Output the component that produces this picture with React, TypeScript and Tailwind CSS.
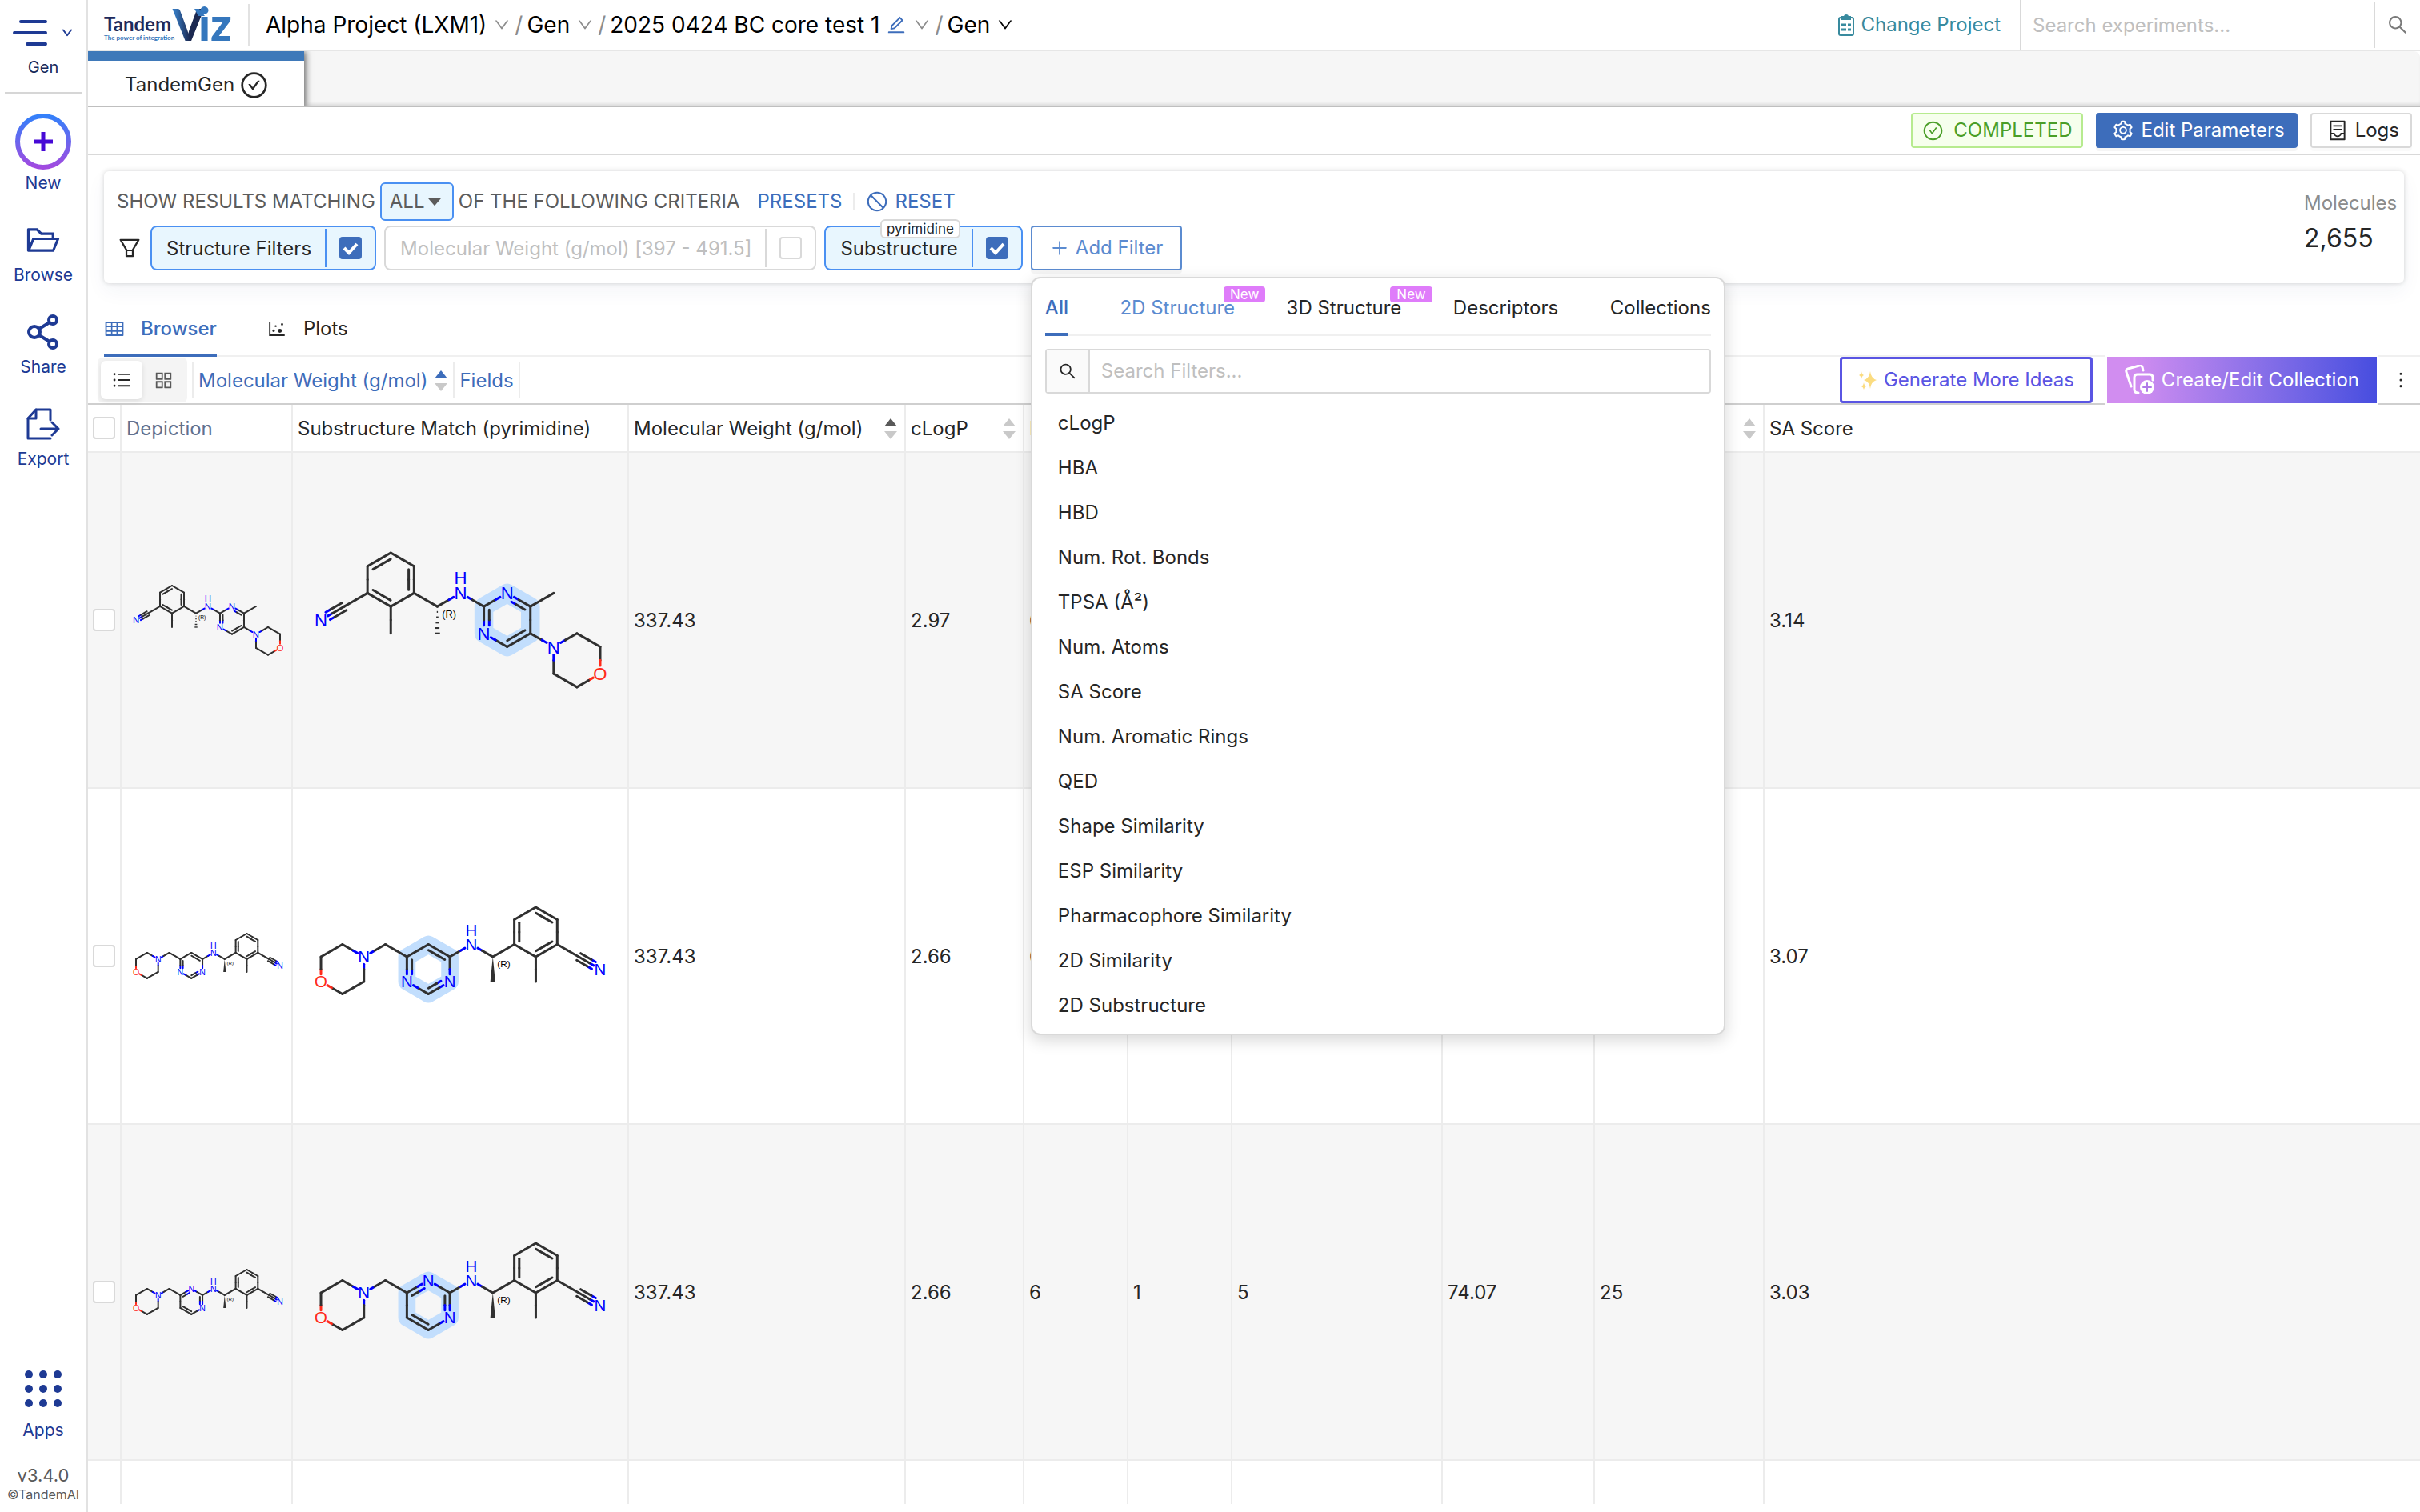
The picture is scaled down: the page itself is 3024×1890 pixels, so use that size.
import type { ReactNode } from "react";
import {
  AiFillCaretDown,
  AiOutlineAppstore,
  AiOutlineCheckCircle,
  AiOutlineContainer,
  AiOutlineDotChart,
  AiOutlineDown,
  AiOutlineEdit,
  AiOutlineFilter,
  AiOutlineFolderOpen,
  AiOutlineMore,
  AiOutlinePlus,
  AiOutlineSearch,
  AiOutlineSetting,
  AiOutlineStop,
  AiOutlineTable,
  AiOutlineUnorderedList,
} from "react-icons/ai";

/* ---------- molecule drawings ---------- */

// Atoms sit on a hexagonal grid: x in units of cos(30), y in units of half a bond.
type Atom = { x: number; y: number; el?: "N" | "O"; h?: boolean };
// center is the middle of the ring that the second line of a double bond leans to
type Bond = { a: number; b: number; order?: 2 | 3; center?: [number, number] };
type MoleculeData = {
  atoms: Atom[];
  bonds: Bond[];
  ring: number[];
  stereo: { from: number; to: number; kind: "hash" | "wedge" };
  minY: number;
  maxY: number;
  width: number;
};

const anilinePyrimidine: MoleculeData = {
  width: 12,
  minY: -5,
  maxY: 5,
  atoms: [
    { x: 0, y: 0, el: "N" },
    { x: 1, y: -1 },
    { x: 2, y: -2 },
    { x: 2, y: -4 },
    { x: 3, y: -5 },
    { x: 4, y: -4 },
    { x: 4, y: -2 },
    { x: 3, y: -1 },
    { x: 3, y: 1 },
    { x: 5, y: -1 },
    { x: 5, y: 1 },
    { x: 6, y: -2, el: "N", h: true },
    { x: 7, y: -1 },
    { x: 8, y: -2, el: "N" },
    { x: 9, y: -1 },
    { x: 9, y: 1 },
    { x: 8, y: 2 },
    { x: 7, y: 1, el: "N" },
    { x: 10, y: -2 },
    { x: 10, y: 2, el: "N" },
    { x: 11, y: 1 },
    { x: 12, y: 2 },
    { x: 12, y: 4, el: "O" },
    { x: 11, y: 5 },
    { x: 10, y: 4 },
  ],
  bonds: [
    { a: 0, b: 1, order: 3 },
    { a: 1, b: 2 },
    { a: 2, b: 3 },
    { a: 3, b: 4, order: 2, center: [3, -3] },
    { a: 4, b: 5 },
    { a: 5, b: 6, order: 2, center: [3, -3] },
    { a: 6, b: 7 },
    { a: 7, b: 2, order: 2, center: [3, -3] },
    { a: 7, b: 8 },
    { a: 6, b: 9 },
    { a: 9, b: 11 },
    { a: 11, b: 12 },
    { a: 12, b: 13 },
    { a: 13, b: 14, order: 2, center: [8, 0] },
    { a: 14, b: 15 },
    { a: 15, b: 16, order: 2, center: [8, 0] },
    { a: 16, b: 17 },
    { a: 17, b: 12, order: 2, center: [8, 0] },
    { a: 14, b: 18 },
    { a: 15, b: 19 },
    { a: 19, b: 20 },
    { a: 20, b: 21 },
    { a: 21, b: 22 },
    { a: 22, b: 23 },
    { a: 23, b: 24 },
    { a: 24, b: 19 },
  ],
  ring: [12, 13, 14, 15, 16, 17],
  stereo: { from: 9, to: 10, kind: "hash" },
};

const morpholineAtoms = (top?: "N", left?: "N"): Atom[] => [
  { x: 0, y: 0 },
  { x: 1, y: -1 },
  { x: 2, y: 0, el: "N" },
  { x: 2, y: 2 },
  { x: 1, y: 3 },
  { x: 0, y: 2, el: "O" },
  { x: 3, y: -1 },
  { x: 4, y: 0 },
  { x: 5, y: -1, el: top },
  { x: 6, y: 0 },
  { x: 6, y: 2, el: "N" },
  { x: 5, y: 3 },
  { x: 4, y: 2, el: left },
  { x: 7, y: -1, el: "N", h: true },
  { x: 8, y: 0 },
  { x: 8, y: 2 },
  { x: 9, y: -1 },
  { x: 9, y: -3 },
  { x: 10, y: -4 },
  { x: 11, y: -3 },
  { x: 11, y: -1 },
  { x: 10, y: 0 },
  { x: 10, y: 2 },
  { x: 12, y: 0 },
  { x: 13, y: 1, el: "N" },
];

const morpholineBonds: Bond[] = [
  { a: 0, b: 1 },
  { a: 1, b: 2 },
  { a: 2, b: 3 },
  { a: 3, b: 4 },
  { a: 4, b: 5 },
  { a: 5, b: 0 },
  { a: 2, b: 6 },
  { a: 6, b: 7 },
  { a: 9, b: 13 },
  { a: 13, b: 14 },
  { a: 14, b: 16 },
  { a: 16, b: 17, order: 2, center: [10, -2] },
  { a: 17, b: 18 },
  { a: 18, b: 19, order: 2, center: [10, -2] },
  { a: 19, b: 20 },
  { a: 20, b: 21, order: 2, center: [10, -2] },
  { a: 21, b: 16 },
  { a: 21, b: 22 },
  { a: 20, b: 23 },
  { a: 24, b: 23, order: 3 },
];

const pyrimidin4yl: MoleculeData = {
  width: 13,
  minY: -4,
  maxY: 3,
  atoms: morpholineAtoms(undefined, "N"),
  bonds: [
    ...morpholineBonds,
    { a: 7, b: 8 },
    { a: 8, b: 9, order: 2, center: [5, 1] },
    { a: 9, b: 10 },
    { a: 10, b: 11, order: 2, center: [5, 1] },
    { a: 11, b: 12 },
    { a: 12, b: 7, order: 2, center: [5, 1] },
  ],
  ring: [7, 8, 9, 10, 11, 12],
  stereo: { from: 14, to: 15, kind: "wedge" },
};

const pyrimidin2yl: MoleculeData = {
  ...pyrimidin4yl,
  atoms: morpholineAtoms("N", undefined),
  bonds: [
    ...morpholineBonds,
    { a: 7, b: 8, order: 2, center: [5, 1] },
    { a: 8, b: 9 },
    { a: 9, b: 10, order: 2, center: [5, 1] },
    { a: 10, b: 11 },
    { a: 11, b: 12, order: 2, center: [5, 1] },
    { a: 12, b: 7 },
  ],
};

const inkOf = (el?: string) => (el === "N" ? "#0000ff" : el === "O" ? "#ff2a1a" : "#303030");

const Molecule = ({ data, size, highlight }: { data: MoleculeData; size: number; highlight?: boolean }) => {
  const u = size / data.width;
  const v = u / Math.sqrt(3);
  const bond = 2 * v;
  const pad = highlight ? 22 : 12;
  const stroke = highlight ? 3 : 2;
  const font = bond * 0.66;
  const px = (x: number) => x * u;
  const py = (y: number) => y * v;
  const lines: ReactNode[] = [];

  const segment = (key: string, a: Atom, b: Atom, ox: number, oy: number, trimA: number, trimB: number) => {
    const dx = px(b.x) - px(a.x);
    const dy = py(b.y) - py(a.y);
    const len = Math.hypot(dx, dy);
    const x1 = px(a.x) + ox + (dx / len) * trimA;
    const y1 = py(a.y) + oy + (dy / len) * trimA;
    const x2 = px(b.x) + ox - (dx / len) * trimB;
    const y2 = py(b.y) + oy - (dy / len) * trimB;
    const mx = px(a.x) + ox + dx / 2;
    const my = py(a.y) + oy + dy / 2;
    lines.push(<line key={key + "a"} x1={x1} y1={y1} x2={mx} y2={my} stroke={inkOf(a.el)} />);
    lines.push(<line key={key + "b"} x1={mx} y1={my} x2={x2} y2={y2} stroke={inkOf(b.el)} />);
  };

  data.bonds.forEach((item, i) => {
    const a = data.atoms[item.a];
    const b = data.atoms[item.b];
    const gapA = a.el ? bond * 0.3 : 0;
    const gapB = b.el ? bond * 0.3 : 0;
    segment(`m${i}`, a, b, 0, 0, gapA, gapB);
    if (!item.order) return;
    const dx = px(b.x) - px(a.x);
    const dy = py(b.y) - py(a.y);
    const nx = -dy / bond;
    const ny = dx / bond;
    const inset = bond * 0.12;
    if (item.order === 3) {
      const off = bond * 0.16;
      segment(`p${i}`, a, b, nx * off, ny * off, gapA, 0);
      segment(`q${i}`, a, b, -nx * off, -ny * off, gapA, 0);
      return;
    }
    const [cx, cy] = item.center!;
    const toCenter = (px(cx) - px(a.x)) * nx + (py(cy) - py(a.y)) * ny;
    const off = Math.sign(toCenter) * bond * 0.2;
    segment(`d${i}`, a, b, nx * off, ny * off, Math.max(inset, gapA), Math.max(inset, gapB));
  });

  const from = data.atoms[data.stereo.from];
  const to = data.atoms[data.stereo.to];
  const sx = px(from.x);
  const top = py(from.y);
  const bottom = py(to.y);
  const half = bond * 0.1;
  const extra = highlight && data.maxY === 3 ? 13 : 0;
  const height = py(data.maxY) - py(data.minY) + pad * 2 + extra;

  return (
    <svg
      width={size + pad * 2}
      height={height}
      viewBox={`${-pad} ${py(data.minY) - pad} ${size + pad * 2} ${height}`}
      className="mx-auto block shrink-0"
      role="img"
      aria-label="Molecule"
    >
      {highlight && (
        <polygon
          points={data.ring.map((i) => `${px(data.atoms[i].x)},${py(data.atoms[i].y)}`).join(" ")}
          fill="none"
          stroke="#c2defd"
          strokeWidth={bond * 0.7}
          strokeLinejoin="round"
        />
      )}
      <g strokeWidth={stroke} strokeLinecap="round">
        {lines}
        {data.stereo.kind === "hash" &&
          [0.2, 0.4, 0.6, 0.8, 1].map((t) => (
            <line
              key={t}
              x1={sx - half * t}
              x2={sx + half * t}
              y1={top + (bottom - top) * t}
              y2={top + (bottom - top) * t}
              stroke="#303030"
              strokeWidth={stroke * 0.7}
              strokeLinecap="butt"
            />
          ))}
      </g>
      {data.stereo.kind === "wedge" && (
        <polygon points={`${sx},${top} ${sx - half},${bottom} ${sx + half},${bottom}`} fill="#303030" />
      )}
      <g fontFamily="Liberation Sans, sans-serif" textAnchor="middle">
        {data.atoms.map((atom, i) =>
          atom.el ? (
            <text key={i} x={px(atom.x)} y={py(atom.y) + font * 0.36} fontSize={font} fill={inkOf(atom.el)}>
              {atom.el}
            </text>
          ) : null
        )}
        {data.atoms.map((atom, i) =>
          atom.h ? (
            <text key={i} x={px(atom.x)} y={py(atom.y) - bond * 0.57 + font * 0.36} fontSize={font} fill="#0000ff">
              H
            </text>
          ) : null
        )}
        <text x={sx + bond * 0.44} y={top + bond * 0.42} fontSize={bond * 0.38} fill="#000">
          (R)
        </text>
      </g>
    </svg>
  );
};

/* ---------- small icons ---------- */

const Logo = () => (
  <svg width="160" height="44" viewBox="0 0 160 44" role="img" aria-label="TandemViz" className="block overflow-visible">
    <defs>
      <linearGradient id="vFill" x1="0" y1="0" x2="1" y2="0">
        <stop offset="0.1" stopColor="#3577bd" />
        <stop offset="0.55" stopColor="#1b2850" />
      </linearGradient>
    </defs>
    <text x="0" y="30" fontFamily="Lato, sans-serif" fontWeight="700" fontSize="24" fill="#1e2a5c">
      Tandem
    </text>
    <text x="0" y="41" fontFamily="Lato, sans-serif" fontWeight="700" fontSize="8" fill="#2f73b8">
      The power of integration
    </text>
    <text x="86" y="42" fontFamily="Lato, sans-serif" fontWeight="900" fontSize="55" fill="url(#vFill)">
      V
    </text>
    <text x="118" y="42" fontFamily="Lato, sans-serif" fontWeight="900" fontSize="58" fill="#3577bd">
      iz
    </text>
    <polygon points="113,2 119,2 126,11 118,11" fill="#3577bd" />
  </svg>
);

const MenuIcon = () => (
  <svg width="44" height="34" viewBox="0 0 44 34" stroke="#1e3a94" strokeWidth="4" strokeLinecap="round">
    <path d="M10 3h31M2 17h39M18 31h23" />
  </svg>
);

const NewIcon = () => (
  <svg width="72" height="72" viewBox="0 0 72 72" fill="none">
    <defs>
      <linearGradient id="ringFill" x1="0" y1="0" x2="0" y2="1">
        <stop offset="0" stopColor="#3480fa" />
        <stop offset="1" stopColor="#a14ae0" />
      </linearGradient>
    </defs>
    <circle cx="36" cy="36" r="32" stroke="url(#ringFill)" strokeWidth="6" />
    <path d="M36 24v24M24 36h24" stroke="#4709d6" strokeWidth="5" />
  </svg>
);

const ShareIcon = () => (
  <svg width="42" height="44" viewBox="0 0 42 44" fill="none" stroke="#1e3a94" strokeWidth="4" className="mt-4">
    <circle cx="10" cy="22" r="7" />
    <circle cx="33" cy="7" r="5" />
    <circle cx="33" cy="37" r="5" />
    <path d="M16 18 29 10M16 26l13 8" />
  </svg>
);

const ExportIcon = () => (
  <svg
    width="42"
    height="40"
    viewBox="0 0 42 40"
    fill="none"
    stroke="#1e3a94"
    strokeWidth="3"
    strokeLinejoin="round"
    strokeLinecap="round"
    className="mt-4"
  >
    <path d="M30 15V2H12L2 13v25h28" />
    <path d="M12 2v11H2M18 26h21M32 18l8 8-8 8" />
  </svg>
);

const AppsIcon = () => (
  <svg width="48" height="48" viewBox="0 0 48 48" fill="#1e3a94">
    {[6, 24, 42].map((y) => [6, 24, 42].map((x) => <circle key={`${x}-${y}`} cx={x} cy={y} r="5" />))}
  </svg>
);

const ClipboardIcon = () => (
  <svg width="20" height="28" viewBox="0 0 20 28" fill="none" stroke="#388a9e" strokeWidth="2">
    <rect x="1" y="5" width="18" height="22" rx="2" />
    <path d="M5 7V4h3a2 2 0 0 1 4 0h3v3z" fill="#388a9e" />
    <path d="M4 14h6M12 14h4M4 20h6M12 20h4" strokeWidth="3" />
  </svg>
);

const SparkleIcon = () => (
  <svg width="24" height="24" viewBox="0 0 24 24" fill="#fbdc80">
    <path d="M15 1q1 9 8 11-7 2-8 11-1-9-8-11 7-2 8-11z" />
    <path d="M4 1q.5 4 3 5-2.500 1-3 5-.5-4-3-5 2.500-1 3-5zM7 15q.5 4 3 5-2.500 1-3 4-.5-3-3-4 2.500-1 3-5z" />
  </svg>
);

const CollectionIcon = () => (
  <svg width="38" height="38" viewBox="0 0 38 38" fill="none" stroke="#fff" strokeWidth="3" strokeLinecap="round">
    <path d="M8 27 2 9q-1-3 2-4L18 1q3-1 4 2l1 4" />
    <path d="M17 35q-5 0-5-4V16q0-4 4-4h15q4 0 4 4v3" />
    <circle cx="28" cy="28" r="9" fill="#fff" stroke="none" />
    <path d="M28 23v10M23 28h10" stroke="#b07be8" strokeWidth="2" />
  </svg>
);

const Sorter = ({ up = "#c9c9c9", down = "#c9c9c9" }: { up?: string; down?: string }) => (
  <svg width="18" height="28" viewBox="0 0 18 28" className="shrink-0">
    <path d="M9 1l8 10H1z" fill={up} />
    <path d="M9 27l8-10H1z" fill={down} />
  </svg>
);

const Checkbox = ({ label, checked }: { label: string; checked?: boolean }) => (
  <label className="relative block size-7 shrink-0">
    <input
      type="checkbox"
      aria-label={label}
      defaultChecked={checked}
      className="peer block size-7 appearance-none rounded border-2 border-[#d9d9d9] bg-white checked:border-[#3d6dbb] checked:bg-[#3d6dbb]"
    />
    <svg
      viewBox="0 0 28 28"
      className="pointer-events-none absolute inset-0 hidden size-7 peer-checked:block"
      fill="none"
      stroke="#fff"
      strokeWidth="4"
    >
      <path d="M6 14l6 6L22 9" />
    </svg>
  </label>
);

/* ---------- page parts ---------- */

const SideItem = ({ icon, label }: { icon: ReactNode; label: string }) => (
  <button className="flex w-full flex-col items-center text-[21px] leading-7 text-[#1e3a94]">
    <span className="flex h-[76px] items-center justify-center">{icon}</span>
    {label}
  </button>
);

const Sidebar = () => (
  <aside className="flex w-[110px] shrink-0 flex-col items-center border-r-2 border-[#e2e2e2] bg-white">
    <button className="mt-6 flex items-center gap-4 text-[#1e3a94]" aria-label="Menu">
      <MenuIcon />
      <AiOutlineDown size={16} strokeWidth={50} />
    </button>
    <span className="mt-3 text-[20px] leading-7 text-[#172a5c]">Gen</span>
    <hr className="mt-[17px] w-24 border-t-2 border-[#d6d6d6]" />
    <nav className="mt-[22px] flex w-full flex-col gap-[11px]">
      <SideItem icon={<NewIcon />} label="New" />
      <SideItem icon={<AiOutlineFolderOpen size={46} className="mt-4" />} label="Browse" />
      <SideItem icon={<ShareIcon />} label="Share" />
      <SideItem icon={<ExportIcon />} label="Export" />
    </nav>
    <div className="mt-auto flex w-full flex-col items-center pb-3">
      <SideItem icon={<AppsIcon />} label="Apps" />
      <span className="mt-7 text-[22px] leading-7 text-[#595959]">v3.4.0</span>
      <span className="text-[16px] leading-5 text-[#595959]">©TandemAI</span>
    </div>
  </aside>
);

const Crumb = ({ label, dark, edit }: { label: string; dark?: boolean; edit?: boolean }) => (
  <li className="flex items-center gap-2">
    <a href="#" className="text-black">
      {label}
    </a>
    {edit && <AiOutlineEdit size={26} className="text-[#3d6dbb]" />}
    <AiOutlineDown size={22} className={dark ? "text-black" : "text-[#8c8c8c]"} />
  </li>
);

const TopBar = () => (
  <header className="flex h-16 items-center border-b-2 border-[#e6e6e6] bg-white">
    <div className="ml-5 flex h-[52px] w-[182px] items-center border-r-2 border-[#e2e2e2]">
      <Logo />
    </div>
    <ol className="ml-5 flex items-center gap-[5px] text-[28px] text-[#8c8c8c]">
      <Crumb label="Alpha Project (LXM1)" />
      <li>/</li>
      <Crumb label="Gen" />
      <li>/</li>
      <Crumb label="2025 0424 BC core test 1" edit />
      <li>/</li>
      <Crumb label="Gen" dark />
    </ol>
    <a href="#" className="ml-auto flex items-center gap-2 pr-6 text-[#388a9e]">
      <ClipboardIcon />
      Change Project
    </a>
    <div className="flex h-full w-[500px] items-center border-l-2 border-[#d9d9d9]">
      <input
        type="search"
        aria-label="Search experiments"
        placeholder="Search experiments..."
        className="h-full min-w-0 flex-1 bg-transparent px-[14px] outline-none placeholder:text-[#bfbfbf]"
      />
      <button
        aria-label="Search"
        className="flex h-[58px] w-[58px] items-center justify-center border-l-2 border-[#d9d9d9] text-[#7a7a7a]"
      >
        <AiOutlineSearch size={28} />
      </button>
    </div>
  </header>
);

const FilterChip = ({ label, checked, badge }: { label: string; checked?: boolean; badge?: string }) => (
  <div
    className={
      checked
        ? "relative flex h-14 items-center rounded-lg border-2 border-[#4a90f2] bg-[#e8f6fe] text-[#262626]"
        : "relative flex h-14 items-center rounded-lg border-2 border-[#d9d9d9] bg-white text-[#bfbfbf]"
    }
  >
    <button className="pt-[2px] pr-[17px] pl-[18px]">{label}</button>
    <div
      className={
        checked
          ? "flex h-12 items-center border-l-2 border-[#4a90f2] px-4"
          : "flex h-12 items-center border-l-2 border-[#d9d9d9] px-4"
      }
    >
      <Checkbox label={label} checked={checked} />
    </div>
    {badge && (
      <span className="absolute -top-[10px] right-[76px] rounded-md border-2 border-[#d9d9d9] bg-white px-[6px] text-[17px] leading-5">
        {badge}
      </span>
    )}
  </div>
);

const filterNames = [
  "cLogP",
  "HBA",
  "HBD",
  "Num. Rot. Bonds",
  "TPSA (Å²)",
  "Num. Atoms",
  "SA Score",
  "Num. Aromatic Rings",
  "QED",
  "Shape Similarity",
  "ESP Similarity",
  "Pharmacophore Similarity",
  "2D Similarity",
  "2D Substructure",
];

const NewBadge = () => (
  <span className="absolute -top-[2px] left-full -ml-[14px] h-5 rounded bg-[#df7cfa] px-2 text-[17px] leading-5 text-white">
    New
  </span>
);

const FilterMenu = () => (
  <div className="absolute top-full left-0 z-50 mt-2 w-[868px] rounded-xl border-2 border-[#d9d9d9] bg-white pb-2 text-[#262626] shadow-[0_6px_20px_rgba(0,0,0,0.16)]">
    <div role="tablist" className="mx-4 mt-3 flex h-[60px] justify-between border-b-2 border-[#f0f0f0]">
      <button role="tab" aria-selected="true" className="-mb-[2px] border-b-4 border-[#3d6dbb] pb-[6px] font-medium text-[#3d6dbb]">
        All
      </button>
      <button role="tab" className="relative pb-2 text-[#5b8bd0]">
        2D Structure
        <NewBadge />
      </button>
      <button role="tab" className="relative pb-2">
        3D Structure
        <NewBadge />
      </button>
      <button role="tab" className="pb-2">
        Descriptors
      </button>
      <button role="tab" className="pb-2">
        Collections
      </button>
    </div>
    <div className="mx-4 mt-4 flex h-14 rounded border-2 border-[#d9d9d9]">
      <span className="flex w-[54px] items-center justify-center border-r-2 border-[#d9d9d9] bg-[#fafafa]">
        <AiOutlineSearch size={24} />
      </span>
      <input
        aria-label="Search Filters"
        placeholder="Search Filters..."
        className="min-w-0 flex-1 px-[14px] outline-none placeholder:text-[#bfbfbf]"
      />
    </div>
    <ul className="mt-2">
      {filterNames.map((name) => (
        <li key={name}>
          <button className="flex h-14 w-full items-center px-8 pt-[2px]">{name}</button>
        </li>
      ))}
    </ul>
  </div>
);

const FilterPanel = () => (
  <section className="mt-5 mr-5 ml-5 flex justify-between rounded-md bg-white px-4 pt-[14px] pb-4 shadow-[0_0_6px_rgba(0,0,0,0.16),0_10px_24px_rgba(30,60,120,0.05)]">
    <div className="flex flex-col gap-[6px]">
      <div className="flex h-12 items-center text-[#5c5c5c]">
        <label htmlFor="match-mode">SHOW RESULTS MATCHING</label>
        <div className="relative mx-[6px]">
          <select
            id="match-mode"
            className="block h-12 w-[92px] appearance-none rounded-md border-2 border-[#4a90f2] bg-[#e8f6fe] pl-[10px] text-[#5c5c5c] outline-none"
          >
            <option>ALL</option>
            <option>ANY</option>
          </select>
          <AiFillCaretDown size={24} className="pointer-events-none absolute top-3 right-3" />
        </div>
        OF THE FOLLOWING CRITERIA
        <button className="ml-[22px] text-[#3d6dbb]">PRESETS</button>
        <span className="mx-[14px] h-[22px] border-l-2 border-[#ececec]" />
        <button className="flex items-center gap-2 text-[#3d6dbb]">
          <AiOutlineStop size={28} />
          RESET
        </button>
      </div>
      <div className="flex items-center gap-[10px]">
        <AiOutlineFilter size={32} className="text-[#262626]" />
        <FilterChip label="Structure Filters" checked />
        <FilterChip label="Molecular Weight (g/mol) [397 - 491.5]" />
        <FilterChip label="Substructure" checked badge="pyrimidine" />
        <div className="relative">
          <button className="flex h-14 items-center gap-2 rounded border-2 border-[#5b8bd0] bg-white px-[22px] text-[#5b8bd0] shadow-[0_4px_0_rgba(0,0,0,0.04)]">
            <AiOutlinePlus size={24} />
            Add Filter
          </button>
          <FilterMenu />
        </div>
      </div>
    </div>
    <div className="w-[109px] pt-[10px]">
      <div className="text-[#8c8c8c]">Molecules</div>
      <div className="mt-[10px] text-[32px] leading-9 text-[#262626]">2,655</div>
    </div>
  </section>
);

const ResultTabs = () => (
  <div role="tablist" className="mt-5 ml-5 flex h-[72px] gap-[62px] border-b-2 border-[#f0f0f0]">
    <button
      role="tab"
      aria-selected="true"
      className="-mb-[2px] flex items-center gap-5 border-b-4 border-[#3d6dbb] pt-[6px] font-medium text-[#3d6dbb]"
    >
      <AiOutlineTable size={26} />
      Browser
    </button>
    <button role="tab" className="flex items-center gap-5 pt-1 text-[#262626]">
      <AiOutlineDotChart size={26} />
      Plots
    </button>
  </div>
);

const Divider = () => <span className="h-[46px] w-[2px] bg-[#ececec]" />;

const TableToolbar = () => (
  <div className="flex h-[60px] shrink-0 items-center border-b-2 border-[#cfcfcf] pl-3">
    <div className="mr-[6px] flex h-14 items-center rounded-md bg-[#f4f4f4] p-1 text-[#262626]">
      <button
        aria-label="List view"
        className="flex h-12 w-[52px] items-center justify-center rounded-md bg-white shadow-[0_2px_6px_rgba(0,0,0,0.1)]"
      >
        <AiOutlineUnorderedList size={26} />
      </button>
      <button aria-label="Card view" className="flex h-12 w-[52px] items-center justify-center text-[#595959]">
        <AiOutlineAppstore size={27} />
      </button>
    </div>
    <Divider />
    <button className="flex items-center gap-2 px-[6px] pt-[2px] text-[#3d6dbb]">
      Molecular Weight (g/mol)
      <Sorter up="#3d6dbb" />
    </button>
    <Divider />
    <button className="px-[6px] pt-[2px] text-[#3d6dbb]">Fields</button>
    <Divider />
    <button className="ml-auto flex h-[58px] items-center gap-2 rounded border-3 border-[#5a55e3] bg-white px-5 text-[#5a55e3]">
      <SparkleIcon />
      Generate More Ideas
    </button>
    <button className="ml-[18px] flex h-[58px] items-center gap-2 bg-linear-to-r from-[#d18df0] from-10% to-[#474ddf] px-[22px] text-white ring-2 ring-white">
      <CollectionIcon />
      Create/Edit Collection
    </button>
    <button aria-label="More" className="mr-[10px] ml-4 text-[#262626]">
      <AiOutlineMore size={28} />
    </button>
  </div>
);

const columns = [
  { title: "Molecular Weight (g/mol)", up: "#595959" },
  { title: "cLogP" },
  { title: "HBA" },
  { title: "HBD" },
  { title: "Num. Rot. Bonds" },
  { title: "TPSA (Å²)" },
  { title: "Num. Atoms" },
];

const rows = [
  { id: 1, molecule: anilinePyrimidine, values: ["337.43", "2.97", "6", "1", "4", "74.07", "25", "3.14"] },
  { id: 2, molecule: pyrimidin4yl, values: ["337.43", "2.66", "6", "1", "5", "74.07", "25", "3.07"] },
  { id: 3, molecule: pyrimidin2yl, values: ["337.43", "2.66", "6", "1", "5", "74.07", "25", "3.03"] },
];

const cell = "border-r-2 border-b-2 border-[#ececec] pt-[2px] pr-2 pl-[6px] last:border-r-0";

const ResultTable = () => (
  <div className="mb-[10px] min-h-0 flex-1 overflow-hidden">
    <table className="w-full table-fixed border-separate border-spacing-0 text-left text-[#262626]">
      <colgroup>
        <col className="w-[42px]" />
        <col className="w-[214px]" />
        <col className="w-[420px]" />
        <col className="w-[346px]" />
        <col className="w-[148px]" />
        <col className="w-[130px]" />
        <col className="w-[130px]" />
        <col className="w-[263px]" />
        <col className="w-[190px]" />
        <col className="w-[212px]" />
        <col />
      </colgroup>
      <thead>
        <tr className="h-[60px] *:font-normal">
          <th className="border-r-2 border-b-2 border-[#ececec] pl-[6px]">
            <Checkbox label="Select all" />
          </th>
          <th className={`${cell} text-[#62718f]`}>Depiction</th>
          <th className={cell}>Substructure Match (pyrimidine)</th>
          {columns.map((column) => (
            <th key={column.title} className={cell}>
              <div className="flex items-center justify-between">
                <span className="truncate">{column.title}</span>
                <Sorter up={column.up} />
              </div>
            </th>
          ))}
          <th className={cell}>SA Score</th>
        </tr>
      </thead>
      <tbody>
        {rows.map((row) => (
          <tr key={row.id} className="h-[420px] odd:bg-[#f6f6f6]">
            <td className="border-r-2 border-b-2 border-[#ececec] pl-[6px]">
              <Checkbox label={`Select row ${row.id}`} />
            </td>
            <td className="border-r-2 border-b-2 border-[#ececec] pl-1">
              <Molecule data={row.molecule} size={180} />
            </td>
            <td className="border-r-2 border-b-2 border-[#ececec]">
              <Molecule data={row.molecule} size={349} highlight />
            </td>
            {row.values.map((value, i) => (
              <td key={i} className={cell}>
                {value}
              </td>
            ))}
          </tr>
        ))}
        <tr className="h-[54px]">
          {Array.from({ length: 11 }, (_, i) => (
            <td key={i} className="border-r-2 border-[#ececec] last:border-r-0" />
          ))}
        </tr>
      </tbody>
    </table>
  </div>
);

export default function App() {
  return (
    <div className="flex h-screen overflow-hidden bg-white font-['Inter',sans-serif] text-[24px] leading-8 text-[#262626]">
      <Sidebar />
      <main className="flex min-w-0 flex-1 flex-col">
        <TopBar />
        <div className="flex h-[70px] shrink-0 overflow-hidden rounded-tr-lg border-b-2 border-[#bfbfbf] bg-[#f6f6f6] shadow-[inset_0_-4px_4px_-2px_rgba(0,0,0,0.12)]">
          <button className="-mb-[2px] flex h-[70px] w-[270px] items-center gap-[6px] border-t-12 border-[#3f79b9] bg-white pt-[2px] pr-3 pl-[46px] shadow-[2px_0_8px_rgba(0,0,0,0.6)]">
            TandemGen
            <AiOutlineCheckCircle size={37} />
          </button>
        </div>
        <div className="flex h-[60px] shrink-0 items-center justify-end gap-4 border-b-2 border-[#d9d9d9] pr-[10px]">
          <span className="flex h-11 items-center gap-3 rounded border-2 border-[#b7eb8f] bg-[#f6ffed] px-3 text-[#4a9e28]">
            <AiOutlineCheckCircle size={27} />
            COMPLETED
          </span>
          <button className="flex h-11 items-center gap-2 rounded bg-[#3d6dbb] pr-4 pl-5 text-white shadow-[0_4px_0_rgba(0,0,0,0.04)]">
            <AiOutlineSetting size={28} />
            Edit Parameters
          </button>
          <button className="flex h-11 items-center gap-2 rounded border-2 border-[#d9d9d9] bg-white pr-[14px] pl-[18px] shadow-[0_4px_0_rgba(0,0,0,0.02)]">
            <AiOutlineContainer size={28} />
            Logs
          </button>
        </div>
        <FilterPanel />
        <ResultTabs />
        <TableToolbar />
        <ResultTable />
      </main>
    </div>
  );
}
